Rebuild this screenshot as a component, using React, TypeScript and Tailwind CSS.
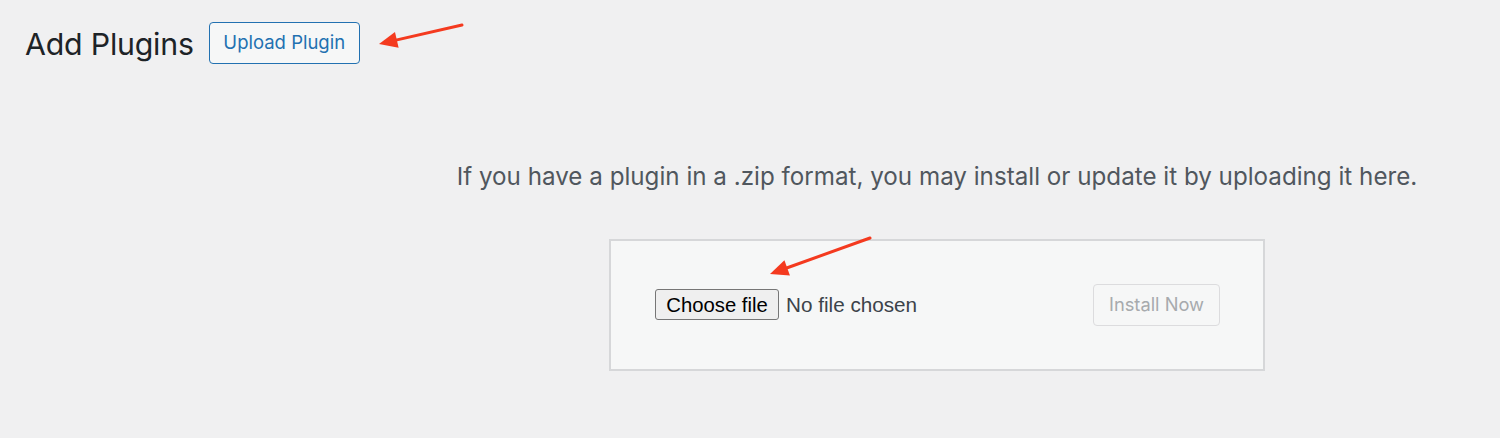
import React from 'react';

function Arrow({ className, x1, y1, x2, y2 }: { className: string; x1: number; y1: number; x2: number; y2: number }) {
  // red annotation arrow, head at (x2, y2)
  const ang = Math.atan2(y2 - y1, x2 - x1);
  const len = 20;
  const spread = 0.42;
  const ax = x2 - len * Math.cos(ang - spread);
  const ay = y2 - len * Math.sin(ang - spread);
  const bx = x2 - len * Math.cos(ang + spread);
  const by = y2 - len * Math.sin(ang + spread);
  const sx = x2 - 14 * Math.cos(ang);
  const sy = y2 - 14 * Math.sin(ang);
  return (
    <svg className={className} width="120" height="60" viewBox="0 0 120 60">
      <line x1={x1} y1={y1} x2={sx} y2={sy} stroke="#f43a1f" strokeWidth="3" strokeLinecap="round" />
      <polygon points={`${x2},${y2} ${ax},${ay} ${bx},${by}`} fill="#f43a1f" />
    </svg>
  );
}

export default function App() {
  return (
    <div className="relative w-[1500px] h-[438px] bg-[#f0f0f1] overflow-hidden font-['Inter',sans-serif]">
      <div className="flex items-center gap-[15px] pl-[25px] pt-[22px]">
        <h1 className="text-[30.3px] leading-none text-[#1d2327] font-normal tracking-[-0.2px] mt-[2px]">Add Plugins</h1>
        <button className="h-[42px] w-[151px] border border-[#2271b1] rounded-[4px] bg-[#f6f7f7] text-[#2271b1] text-[18.5px]">
          Upload Plugin
        </button>
      </div>

      <div className="pl-[374px] flex flex-col items-center mt-[98px]">
        <p className="text-[24.2px] text-[#50575e] leading-[30px]">
          If you have a plugin in a .zip format, you may install or update it by uploading it here.
        </p>
        <div className="mt-[47px] w-[656px] h-[132px] border-2 border-[#d6d7d9] bg-[#f6f7f7] flex items-center justify-between pl-[44px] pr-[43px]">
          <div className="flex items-center gap-[7px] font-['Liberation_Sans',Arial,sans-serif]">
            <span className="h-[31px] w-[124px] flex items-center justify-center border border-[#767676] rounded-[3px] bg-[#efefef] text-black text-[20.3px]">
              Choose file
            </span>
            <span className="text-[20.7px] text-[#3c434a]">No file chosen</span>
          </div>
          <button className="h-[42px] w-[127px] border border-[#dcdcde] rounded-[4px] bg-[#f6f7f7] text-[#a7aaad] text-[18.3px]">
            Install Now
          </button>
        </div>
      </div>

      <Arrow className="absolute left-[370px] top-[10px]" x1={92} y1={15} x2={9} y2={34} />
      <Arrow className="absolute left-[760px] top-[225px]" x1={110} y1={13} x2={10} y2={49} />
    </div>
  );
}
